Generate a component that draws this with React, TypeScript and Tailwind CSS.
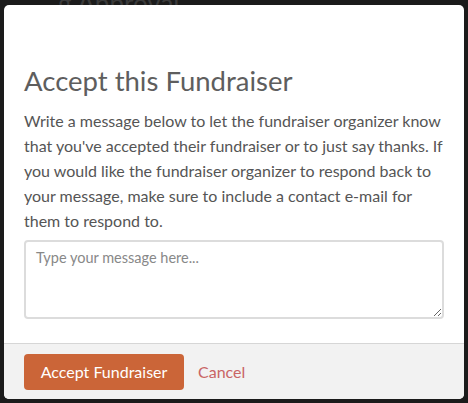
export default function App() {
  return (
    <div
      className="relative h-[403px] w-[468px] overflow-hidden bg-[#1b1b1b] pl-[4px] pt-[5px]"
      style={{ fontFamily: 'Lato, "Open Sans", sans-serif' }}
    >
      {/* page behind the modal */}
      <div className="absolute left-[58px] top-[-16px] text-[26px] text-[#3a3a3a]">g Approval</div>

      <div className="relative flex h-[394px] w-[460px] flex-col overflow-hidden rounded-[5px] bg-white">
        <div className="flex flex-1 flex-col px-[20px] pt-[60px]">
          <h1 className="text-[27.5px] leading-[32px] font-normal text-[#5e5e5e]">Accept this Fundraiser</h1>
          <p className="mt-[11px] text-[16px] leading-[25px] text-[#555]">
            Write a message below to let the fundraiser organizer know that you've accepted their
            fundraiser or to just say thanks. If you would like the fundraiser organizer to respond
            back to your message, make sure to include a contact e-mail for them to respond to.
          </p>
          <textarea
            placeholder="Type your message here..."
            className="mt-[7px] h-[79px] w-[420px] resize-y rounded-[4px] border-2 border-[#dcdcdc] px-[10px] py-[5px] text-[14.5px] text-[#555] outline-none placeholder:text-[#888]"
          />
        </div>
        <div className="flex h-[56px] items-start gap-[14px] border-t border-[#d6d6d6] bg-[#f2f2f2] px-[20px] pt-[10px]">
          <button className="h-[36px] w-[160px] rounded-[4px] bg-[#cb6538] text-[16px] text-white">
            Accept Fundraiser
          </button>
          <button className="h-[36px] text-[16px] text-[#c96565]">Cancel</button>
        </div>
      </div>
    </div>
  )
}
